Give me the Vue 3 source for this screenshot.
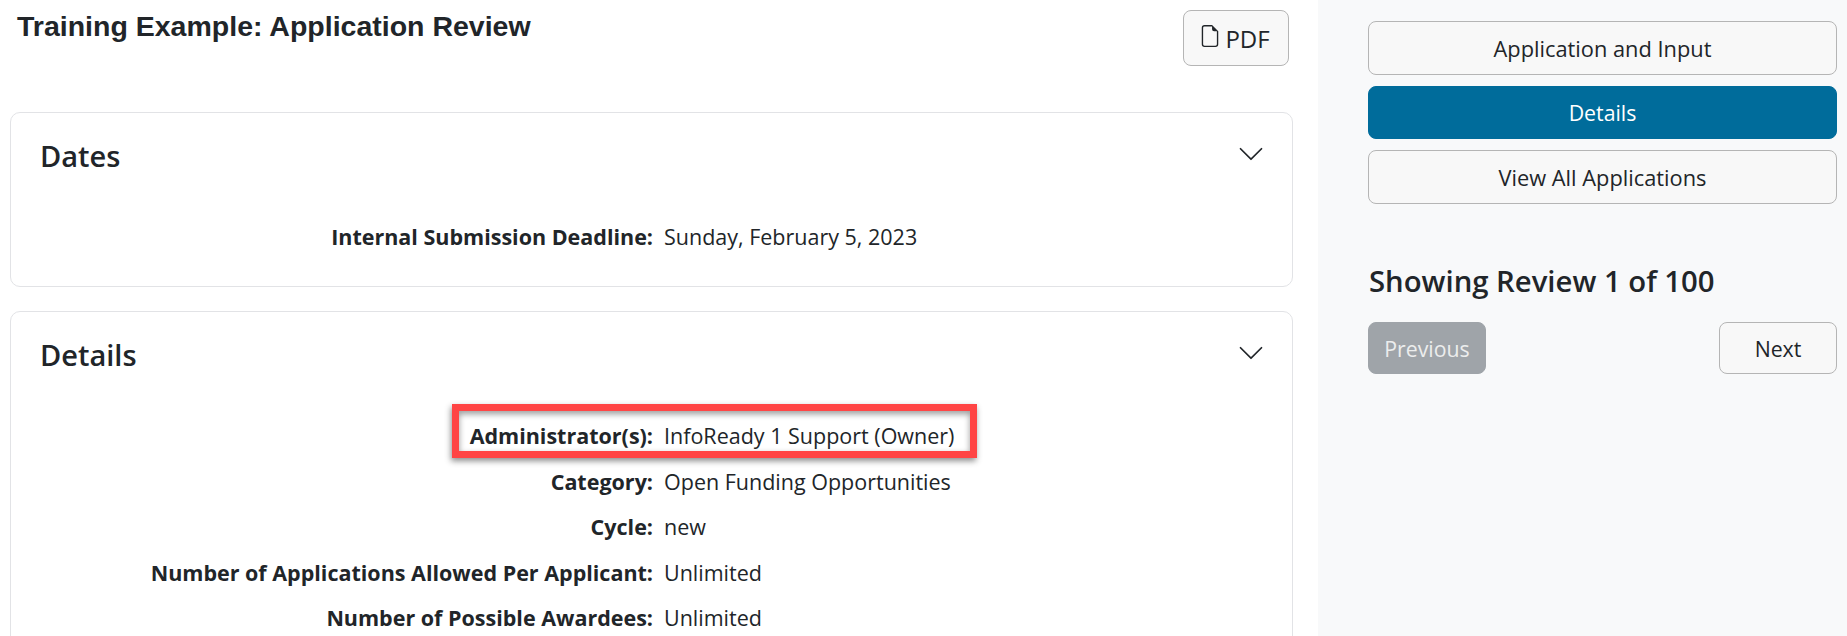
<template>
  <div class="page">
    <main class="main">
      <header class="top">
        <h1 class="title">Training Example: Application Review</h1>
        <button class="btn pdf">
          <svg class="file-icon" viewBox="0 0 16 16" fill="currentColor">
            <path d="M14 4.5V14a2 2 0 0 1-2 2H4a2 2 0 0 1-2-2V2a2 2 0 0 1 2-2h5.5L14 4.5zm-3 0A1.5 1.5 0 0 1 9.5 3V1H4a1 1 0 0 0-1 1v12a1 1 0 0 0 1 1h8a1 1 0 0 0 1-1V4.5h-2z" />
          </svg>
          PDF
        </button>
      </header>

      <section v-for="card in cards" :key="card.title" class="card">
        <div class="card-head">
          <h2 class="card-title">{{ card.title }}</h2>
          <svg class="chevron" viewBox="0 0 16 16" fill="currentColor">
            <path d="M1.646 4.646a.5.5 0 0 1 .708 0L8 10.293l5.646-5.647a.5.5 0 0 1 .708.708l-6 6a.5.5 0 0 1-.708 0l-6-6a.5.5 0 0 1 0-.708z" />
          </svg>
        </div>
        <div v-for="row in card.rows" :key="row.label" class="row">
          <span class="label">{{ row.label }}:</span>
          <span class="value">{{ row.value }}</span>
          <span v-if="row.marked" class="marker"></span>
        </div>
      </section>
    </main>

    <aside class="side">
      <button class="btn nav">Application and Input</button>
      <button class="btn nav active">Details</button>
      <button class="btn nav">View All Applications</button>

      <h2 class="showing">Showing Review 1 of 100</h2>
      <div class="pager">
        <button class="btn page-btn disabled">Previous</button>
        <button class="btn page-btn">Next</button>
      </div>
    </aside>
  </div>
</template>

<script setup>
const cards = [
  {
    title: 'Dates',
    rows: [{ label: 'Internal Submission Deadline', value: 'Sunday, February 5, 2023' }]
  },
  {
    title: 'Details',
    rows: [
      { label: 'Administrator(s)', value: 'InfoReady 1 Support (Owner)', marked: true },
      { label: 'Category', value: 'Open Funding Opportunities' },
      { label: 'Cycle', value: 'new' },
      { label: 'Number of Applications Allowed Per Applicant', value: 'Unlimited' },
      { label: 'Number of Possible Awardees', value: 'Unlimited' }
    ]
  }
]
</script>

<style>
html,
body {
  margin: 0;
  background: #fff;
}
</style>

<style scoped>
.page {
  display: flex;
  height: 636px;
  overflow: hidden;
  font-family: "Open Sans", "Noto Sans", sans-serif;
  font-size: 21.5px;
  color: #212529;
}

.main {
  flex: 0 0 1318px;
  box-sizing: border-box;
  padding: 0 25px 0 10px;
}

.top {
  display: flex;
  justify-content: space-between;
  align-items: flex-start;
  height: 112px;
}

.title {
  margin: 10px 0 0 7px;
  font-family: "Liberation Sans", Arial, sans-serif;
  font-size: 28.5px;
  font-weight: 700;
  line-height: 32px;
}

.btn {
  box-sizing: border-box;
  border: 1px solid #b5b5b5;
  border-radius: 8px;
  background: #f8f8f8;
  color: #212529;
  font: inherit;
  cursor: pointer;
}

.pdf {
  display: flex;
  align-items: center;
  justify-content: center;
  gap: 4px;
  width: 106px;
  height: 56px;
  margin: 10px 4px 0 0;
  padding: 0 3px 0 0;
  font-size: 24px;
}

.file-icon {
  width: 22px;
  height: 22px;
  margin-top: -4px;
}

.card {
  margin-bottom: 24px;
  padding: 0 0 26.5px;
  border: 1px solid #e2e3e6;
  border-radius: 10px;
}

.card-head {
  display: flex;
  justify-content: space-between;
  align-items: flex-start;
  height: 101px;
  padding: 0 27px 0 29px;
}

.card-title {
  margin: 21px 0 0;
  font-size: 29px;
  font-weight: 600;
  line-height: 44px;
}

.chevron {
  width: 28px;
  height: 28px;
  margin-top: 27px;
}

.row {
  position: relative;
  display: flex;
  gap: 11px;
  height: 45.5px;
  line-height: 45.5px;
  white-space: nowrap;
}

.label {
  flex: 0 0 642px;
  text-align: right;
  font-weight: 700;
}

.marker {
  position: absolute;
  top: -9px;
  left: 441px;
  box-sizing: border-box;
  width: 525px;
  height: 54px;
  border: 7px solid #ff4444;
  box-shadow: -1px 3px 6px rgba(0, 0, 0, 0.45), inset 0 3px 6px rgba(0, 0, 0, 0.4);
}

.side {
  flex: 1;
  box-sizing: border-box;
  padding: 21px 10px 0 50px;
  background: #f8f9fa;
}

.nav {
  display: block;
  width: 100%;
  height: 53.5px;
  margin-bottom: 11px;
  padding: 1px 0 0;
  font-size: 21.8px;
}

.active {
  border-color: #006c9b;
  background: #006c9b;
  color: #fff;
  font-size: 21.3px;
}

.showing {
  margin: 55px 0 0 1px;
  font-size: 29.3px;
  font-weight: 600;
  line-height: 44px;
}

.pager {
  display: flex;
  justify-content: space-between;
  margin-top: 19px;
}

.page-btn {
  width: 118px;
  height: 52px;
  padding: 1px 0 0;
  font-size: 21.3px;
}

.disabled {
  border-color: #9fa4a9;
  background: #9fa4a9;
  color: #eceded;
}
</style>
